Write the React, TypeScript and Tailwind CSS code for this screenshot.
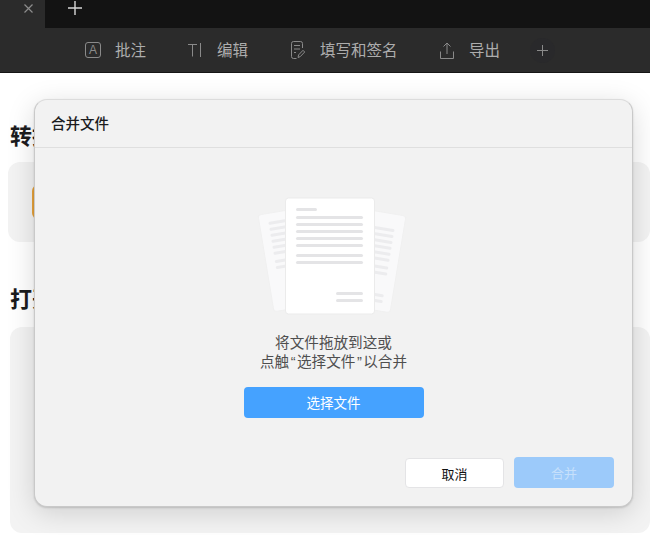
const cjk = { fontFamily: '"Noto Sans CJK SC", "Noto Sans", sans-serif' };
const latin = { fontFamily: '"Liberation Sans", sans-serif' };

function ToolItem({ icon, label, iconGap }: { icon: React.ReactNode; label: string; iconGap: string }) {
  return (
    <div className={`flex items-center ${iconGap}`}>
      {icon}
      <span className="text-[15.5px] leading-none text-[#adadad]">{label}</span>
    </div>
  );
}

function SidePageLines({ dir }: { dir: 1 | -1 }) {
  const rows = dir === 1 ? [8.5, 14.6, 20.7, 26.8, 32.9, 39, 47.3, 53.4] : [15, 21, 27, 33, 39, 45, 53, 59];
  const xFor = (len: number) => (dir === 1 ? 9 : -9 - len);
  return (
    <>
      {rows.map((y) => (
        <rect key={y} x={xFor(60)} y={y} width={60} height={3} rx={1.5} fill="#ececee" />
      ))}
      {dir === -1 &&
        [81, 87].map((y) => <rect key={y} x={xFor(25)} y={y} width={25} height={3} rx={1.5} fill="#ececee" />)}
    </>
  );
}

function Illustration() {
  const lines = [31, 38, 45, 52, 59, 69, 76];
  return (
    <svg width="180" height="140" viewBox="0 0 180 140" fill="none" className="-ml-[7px]">
      <g transform="translate(18 30) rotate(-9.4)">
        <rect x="0" y="0" width="72" height="98" rx="3" fill="#f9f9fa" stroke="#f0f0f0" />
        <SidePageLines dir={1} />
      </g>
      <g transform="translate(166 31) rotate(9.4)">
        <rect x="-72" y="0" width="72" height="98" rx="3" fill="#f9f9fa" stroke="#f0f0f0" />
        <SidePageLines dir={-1} />
      </g>
      <rect x="45.5" y="13" width="89" height="116" rx="3" fill="#ffffff" stroke="#ebebeb" />
      <rect x="56" y="23" width="21" height="3" rx="1.5" fill="#e4e4e6" />
      {lines.map((y) => (
        <rect key={y} x="56" y={y} width="67" height="3" rx="1.5" fill="#e4e4e6" />
      ))}
      <rect x="96" y="107" width="27" height="3" rx="1.5" fill="#e4e4e6" />
      <rect x="96" y="114" width="27" height="3" rx="1.5" fill="#e4e4e6" />
    </svg>
  );
}

export default function App() {
  return (
    <div className="relative h-[535px] w-full overflow-hidden bg-white" style={cjk}>
      <div className="flex h-7 bg-[#131313]">
        <div className="w-[45px] bg-[#2b2b2b] pt-[4px] pl-[24px]">
          <svg width="9" height="9" viewBox="0 0 9 9" className="block">
            <path d="M.5.5l8 8M8.5.5l-8 8" stroke="#8c8c8c" strokeWidth="1.2" />
          </svg>
        </div>
        <div className="ml-[23px] pt-[1px]">
          <svg width="14" height="14" viewBox="0 0 14 14" className="block">
            <path d="M7 0v14M0 7h14" stroke="#d8d8d8" strokeWidth="1.4" />
          </svg>
        </div>
      </div>

      <div className="flex h-[45px] items-center border-b border-[#161616] bg-[#2b2b2b] pl-[85px]">
        <ToolItem
          iconGap="gap-[14px]"
          label="批注"
          icon={
            <span className="flex h-4 w-4 items-center justify-center rounded-[3px] border border-[#8a8a8a] text-[12px] leading-none text-[#8a8a8a]" style={latin}>
              A
            </span>
          }
        />
        <div className="ml-[42px]">
          <ToolItem
            iconGap="gap-[16px]"
            label="编辑"
            icon={
              <svg width="13" height="14" viewBox="0 0 13 14" fill="none" stroke="#8a8a8a" strokeWidth="1">
                <path d="M0 1.5h9M4.5 1.5V13.5M12.5 0v14" />
              </svg>
            }
          />
        </div>
        <div className="ml-[43px]">
          <ToolItem
            iconGap="gap-[15px]"
            label="填写和签名"
            icon={
              <svg width="14" height="18" viewBox="0 0 14 18" fill="none" stroke="#8a8a8a" strokeWidth="1">
                <path d="M11.5 7V2.5a2 2 0 0 0-2-2h-7a2 2 0 0 0-2 2v13a2 2 0 0 0 2 2h3" />
                <path d="M3 4.5h6M3 8h6M3 11.5h2" />
                <path d="M7 16.5l.6-2.6 4.4-4.6 1.7 1.7-4.4 4.6z" />
              </svg>
            }
          />
        </div>
        <div className="ml-[42.5px]">
          <ToolItem
            iconGap="gap-[15px]"
            label="导出"
            icon={
              <svg width="14" height="17" viewBox="0 0 14 17" fill="none" stroke="#8a8a8a" strokeWidth="1">
                <path d="M7 12V1M3.5 4.5L7 1l3.5 3.5M.5 9.5v7h13v-7" />
              </svg>
            }
          />
        </div>
        <div className="ml-[30px] flex h-[25px] w-[25px] items-center justify-center rounded-full bg-[#29292b]">
          <svg width="11" height="11" viewBox="0 0 11 11">
            <path d="M5.5 0v11M0 5.5h11" stroke="#8a8a8a" strokeWidth="1" />
          </svg>
        </div>
      </div>

      <div className="flex flex-col">
        <h2 className="mt-[49px] ml-[10px] text-[22px] leading-[24px] font-bold text-[#1c1c1e]">转换</h2>
        <div className="mt-[16px] ml-2 flex h-[80px] items-center rounded-[12px] bg-[#f3f3f3] pl-6">
          <div className="h-[34px] w-8 rounded-[6px] bg-[#e8a33c]" />
        </div>
        <h2 className="mt-[43px] ml-[10px] text-[22px] leading-[24px] font-bold text-[#1c1c1e]">打开</h2>
        <div className="mt-[18px] ml-[10px] h-[206px] rounded-[12px] bg-[#f3f3f3]" />
      </div>

      <div className="absolute top-[99px] left-[34px] flex h-[408px] w-[599px] flex-col rounded-[13px] border border-[#c9c9c9] border-t-[#dcdcdc] bg-[#f2f2f2] shadow-[0_1px_2px_rgba(0,0,0,0.15),0_6px_28px_rgba(0,0,0,0.15)]">
        <div className="flex h-[48px] items-center border-b border-[#dfdfdf] pb-[1px] pl-4 text-[14.5px] leading-none font-medium text-[#1c1c1e]">
          合并文件
        </div>
        <div className="flex flex-1 flex-col items-center pt-[37px]">
          <Illustration />
          <div className="mt-[8px] text-center text-[14.6px] leading-[18.5px] text-[#4f4f4f]">
            <div>将文件拖放到这或</div>
            <div>
              点触<span className="mx-[1.5px]" style={latin}>“</span>选择文件<span className="mx-[1.5px]" style={latin}>”</span>以合并
            </div>
          </div>
          <button className="mt-[16px] h-[31px] w-[180px] rounded-[4px] bg-[#45a2ff] text-[13.5px] leading-none text-white">
            选择文件
          </button>
        </div>
        <div className="flex justify-end gap-[10px] pr-[18px] pb-[18px]">
          <button className="h-[30px] w-[99px] self-end rounded-[4px] border border-[#e4e4e6] bg-white text-[13px] leading-none text-[#111111]">
            取消
          </button>
          <button className="h-[31px] w-[100px] rounded-[4px] bg-[#9ccafa] text-[13px] leading-none text-[#c6e0fb]">
            合并
          </button>
        </div>
      </div>
    </div>
  );
}
